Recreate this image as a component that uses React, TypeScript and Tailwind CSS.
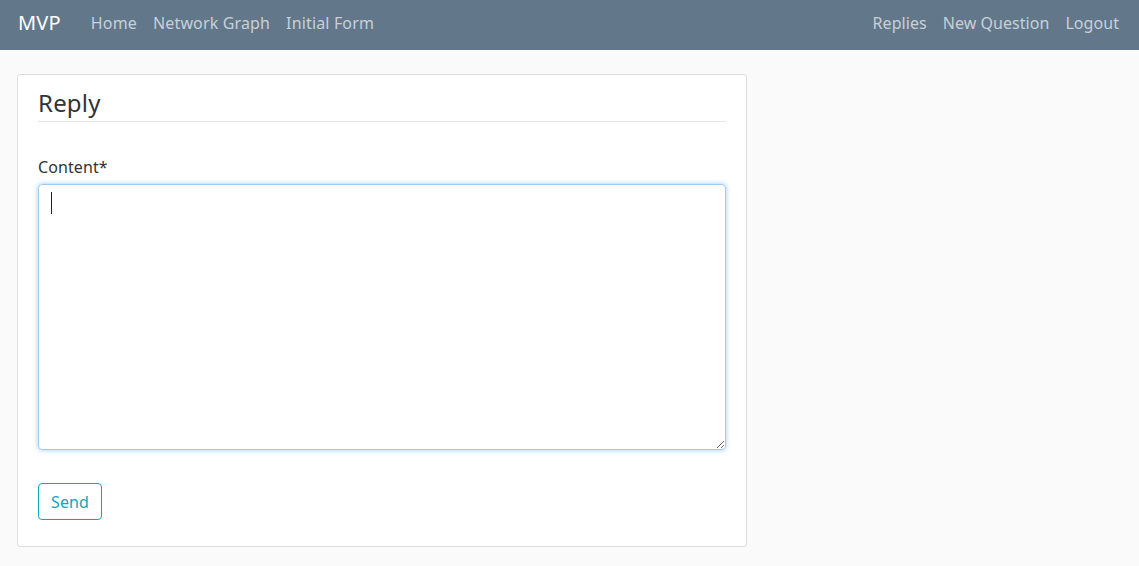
import React from "react";

export default function App() {
  const font = { fontFamily: '"Noto Sans", "Open Sans", sans-serif' };
  return (
    <div className="min-h-[566px] bg-[#fafafa] text-[#333333]" style={font}>
      <nav className="h-[50px] bg-[#627789] flex items-center justify-between pl-[18px] pr-[12px] pb-[4px]">
        <div className="flex items-center">
          <span className="text-[20px] leading-[30px] text-white mr-[22px] tracking-[0.2px]">MVP</span>
          <div className="flex text-[16px] leading-[24px] text-[#c6d1da] tracking-[0.15px]">
            <span className="px-[8px]">Home</span>
            <span className="px-[8px]">Network Graph</span>
            <span className="px-[8px]">Initial Form</span>
          </div>
        </div>
        <div className="flex text-[16px] leading-[24px] text-[#c6d1da] tracking-[0.05px]">
          <span className="px-[8px]">Replies</span>
          <span className="px-[8px]">New Question</span>
          <span className="px-[8px]">Logout</span>
        </div>
      </nav>
      <div className="pl-[17px] pt-[24px]">
        <div className="w-[730px] bg-white border border-[#dddddd] rounded-[3px] px-[20px] pt-[13px] pb-[26px]">
          <h4 className="text-[24px] leading-[29px] pb-[4px] border-b border-[#e5e5e5] text-[#333333] tracking-[0.2px]">Reply</h4>
          <label className="block mt-[33px] mb-[5px] text-[16px] leading-[24px] text-[#333333] tracking-[0.1px]">Content*</label>
          <div className="relative">
            <textarea
              className="block w-[688px] h-[266px] border border-[#9fcbee] rounded-[4px] shadow-[0_0_5px_rgba(102,175,233,0.65)] outline-none px-[12px] py-[6px] text-[16px]"
              defaultValue=""
            />
            <span className="absolute left-[13px] top-[8px] w-px h-[22px] bg-[#222]" />
          </div>
          <button className="mt-[33px] h-[37px] px-[12px] border border-[#17a2b8] rounded-[4px] text-[#17a2b8] text-[16px] leading-[24px] bg-white tracking-[0.1px]">
            Send
          </button>
        </div>
      </div>
    </div>
  );
}
